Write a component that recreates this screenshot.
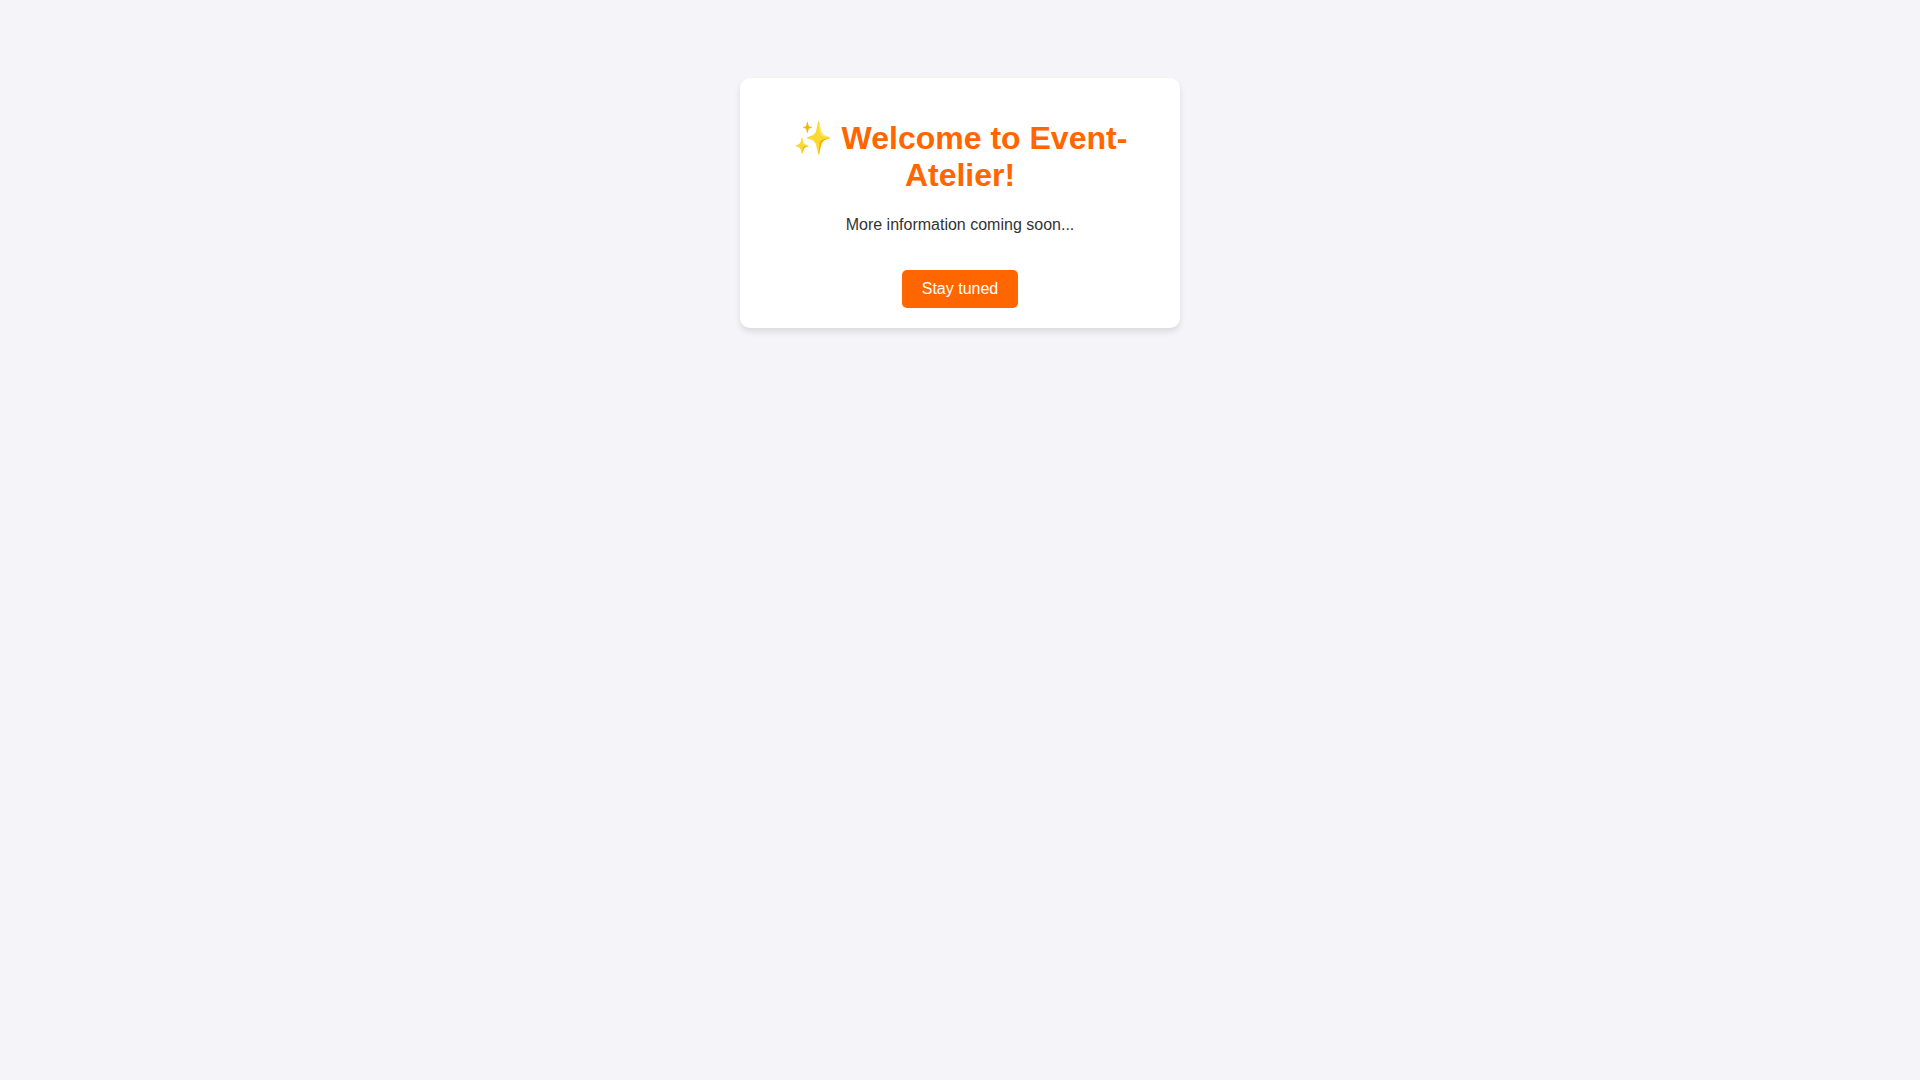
<div class="page">
  <main class="container">
    <h1>✨ Welcome to Event-Atelier!</h1>
    <p>More information coming soon...</p>
    <a class="btn" href="#top">Stay tuned</a>
  </main>
</div>

<style>
  :global(body) {
    margin: 0;
    background: #f4f4f9;
    color: #333;
    font-family: "Liberation Sans", Arial, sans-serif;
    text-align: center;
  }

  .page {
    box-sizing: border-box;
    min-height: 100vh;
    padding: 78px 20px;
  }

  .container {
    max-width: 400px;
    margin: 0 auto;
    padding: 20px;
    background: #fff;
    border-radius: 10px;
    box-shadow: 0 4px 6px rgba(0, 0, 0, 0.1);
  }

  h1 {
    margin: 22px 0;
    color: #ff6600;
    font-size: 32px;
    line-height: 37px;
  }

  p {
    margin: 16px 0;
    font-size: 16px;
    line-height: 18px;
  }

  .btn {
    display: inline-block;
    margin-top: 20px;
    padding: 10px 20px;
    background: #ff6600;
    color: #fff;
    border-radius: 5px;
    text-decoration: none;
    font-size: 16px;
    line-height: 18px;
  }
</style>
